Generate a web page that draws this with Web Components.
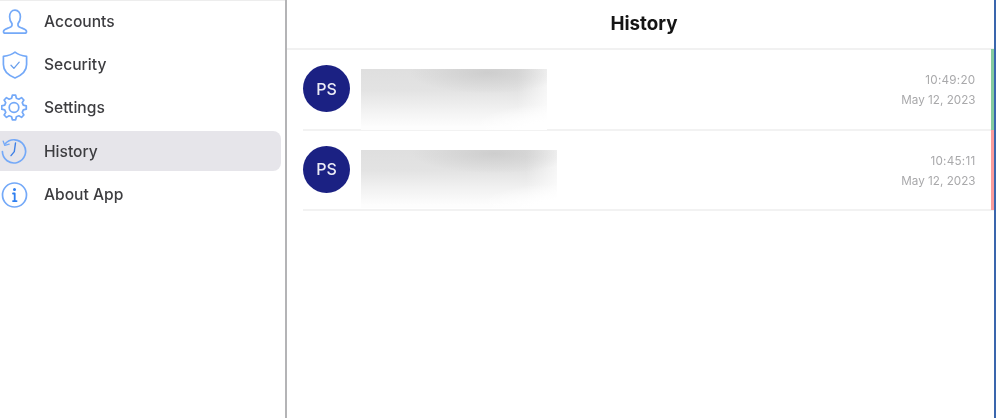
<!DOCTYPE html>
<html lang="en">
<head>
<meta charset="utf-8">
<title>History</title>
<style>
  html, body { margin: 0; height: 100%; background: #fff; overflow: hidden; }
</style>
</head>
<body>
<app-shell>
  <side-nav slot="nav">
    <nav-item label="Accounts" icon="accounts"></nav-item>
    <nav-item label="Security" icon="security"></nav-item>
    <nav-item label="Settings" icon="settings"></nav-item>
    <nav-item label="History" icon="history" selected></nav-item>
    <nav-item label="About App" icon="about"></nav-item>
  </side-nav>
  <history-panel slot="main" heading="History">
    <history-row initials="PS" time="10:49:20" date="May 12, 2023" status="ok" smudge="186" tall></history-row>
    <history-row initials="PS" time="10:45:11" date="May 12, 2023" status="fail" smudge="196"></history-row>
  </history-panel>
</app-shell>

<script>
function gearPath(cx, cy) {
  const teeth = 8, rOut = 12.4, rIn = 9.6;
  let d = "";
  for (let i = 0; i < teeth; i++) {
    const a = (i / teeth) * Math.PI * 2 - Math.PI / 2;
    const step = (Math.PI * 2) / teeth;
    const pts = [
      [rIn, a - step * 0.32],
      [rOut, a - step * 0.17],
      [rOut, a + step * 0.17],
      [rIn, a + step * 0.32],
    ];
    pts.forEach(([r, t], j) => {
      const x = (cx + r * Math.cos(t)).toFixed(2);
      const y = (cy + r * Math.sin(t)).toFixed(2);
      d += (i === 0 && j === 0 ? "M" : "L") + x + " " + y + " ";
    });
  }
  return d + "Z";
}

const ICONS = {
  accounts: `<path d="M14 2.200c-3.300 0-5.400 2.800-5.400 6.600 0 2.900 1 5.200 2.400 6.800v1.600c0 1.200-1 1.800-3.600 2.800-3 1.100-4.900 1.700-4.900 3.400 0 1.100.7 1.800 1.900 1.800h19.200c1.200 0 1.900-.7 1.900-1.800 0-1.700-1.900-2.300-4.900-3.400-2.600-1-3.600-1.600-3.600-2.800v-1.600c1.400-1.600 2.400-3.900 2.400-6.800 0-3.800-2.100-6.600-5.400-6.600z"/>`,
  security: `<path d="M14 1.200c3 2.400 7 3.700 11.600 4.200v8.200c0 5.800-4.400 10.600-11.600 13.400C6.800 24.200 2.400 19.400 2.400 13.600V5.400C7 4.900 11 3.600 14 1.200z"/><path d="M10 14.300l2.900 3.100 5.300-6.200" stroke="#6a9fec" stroke-width="1.300"/>`,
  settings: `<path stroke-linejoin="round" d="${gearPath(13, 13.5)}"/><circle cx="13" cy="13.500" r="4.800"/>`,
  history: `<path d="M4.200 6.800a11.600 11.600 0 1 1-2.800 7.700"/><path d="M2.200 4.200l1.600 4.200 4.400-1.200" stroke-width="1.300"/><path d="M14.500 6l-1.200 8.600-3.300 4" stroke="#3f80e6" stroke-width="1.400"/>`,
  about: `<circle cx="13.500" cy="14" r="12"/><circle cx="13.500" cy="8.600" r="1.500" fill="#2f7ff0" stroke="none"/><path d="M12 12.500h1.700v7.400M12 20.100h3.600" stroke="#2f7ff0" stroke-width="1.800"/>`,
};

const navItemTemplate = document.createElement("template");
navItemTemplate.innerHTML = `
  <style>
    :host { display: flex; align-items: center; height: 40px; border-radius: 0 8px 8px 0; padding-left: 1px; }
    :host([selected]) { background: #e6e5ea; }
    :host([selected]) span { margin-top: 0; }
    svg { width: 28px; height: 28px; flex: none; fill: none; stroke: #74a9f8; stroke-width: 1.700; stroke-linecap: round; stroke-linejoin: round; }
    span { margin-left: 15px; margin-top: -1px; font: 450 15.600px Inter, "Liberation Sans", sans-serif; color: #3d3d40; }
  </style>
  <svg viewBox="0 0 28 28"></svg><span></span>`;

class NavItem extends HTMLElement {
  constructor() {
    super();
    this.attachShadow({ mode: "open" });
    this.shadowRoot.appendChild(navItemTemplate.content.cloneNode(true));
  }
  connectedCallback() {
    this.shadowRoot.querySelector("span").textContent = this.getAttribute("label");
    this.shadowRoot.querySelector("svg").innerHTML = ICONS[this.getAttribute("icon")];
  }
}

class SideNav extends HTMLElement {
  constructor() {
    super();
    this.attachShadow({ mode: "open" });
    this.shadowRoot.innerHTML = `
      <style>
        :host { display: flex; flex-direction: column; gap: 3.330px; padding: 1px 4px 0 0; box-sizing: border-box; height: 100%; }
      </style>
      <slot></slot>`;
  }
}

class HistoryRow extends HTMLElement {
  constructor() {
    super();
    this.attachShadow({ mode: "open" });
  }
  connectedCallback() {
    const status = this.getAttribute("status");
    this.shadowRoot.innerHTML = `
      <style>
        :host { display: flex; height: 80.500px; box-sizing: border-box; border-bottom: 2px solid #f2f2f2; margin-left: 16px; }
        .avatar { width: 47px; height: 47px; margin: 15px 11px 0 0; flex: none; border-radius: 50%; background: #1b2183; color: #ececf6;
          display: flex; align-items: center; justify-content: center; font: 500 16px Inter, "Liberation Sans", sans-serif; }
        .smudge { flex: none; margin-top: 19px; position: relative; z-index: 1; }
        .fill { height: 100%;
          background:
            radial-gradient(ellipse 40% 42% at 100% 100%, #fff 30%, rgba(255,255,255,0)),
            radial-gradient(ellipse 42% 34% at 68% 6%, rgba(196,196,196,.65), rgba(196,196,196,0)),
            linear-gradient(to right, rgba(255,255,255,0) 84%, rgba(255,255,255,.7) 100%),
            linear-gradient(to bottom, #dfdfdf 0%, #e3e3e3 35%, #f2f2f2 68%, #fdfdfd 95%); }
        .when { margin-left: auto; padding: 20px 15px 0 0; text-align: right; font: 400 11.700px Inter, "Liberation Sans", sans-serif; color: #a9a9ab; line-height: 20px; }
        .t { letter-spacing: .25px; }
        .bar { width: 3.500px; flex: none; margin: -1px 0 -1px; background: ${status === "ok" ? "#85cb9f" : "#fb9c9c"}; }
      </style>
      <div class="avatar"></div>
      <div class="smudge" style="width:${this.getAttribute("smudge")}px;height:${this.hasAttribute("tall") ? 61 : 58}px"><div class="fill"></div></div>
      <div class="when"><div class="t"></div><div class="d"></div></div>
      <div class="bar"></div>`;
    this.shadowRoot.querySelector(".avatar").textContent = this.getAttribute("initials");
    this.shadowRoot.querySelector(".t").textContent = this.getAttribute("time");
    this.shadowRoot.querySelector(".d").textContent = this.getAttribute("date");
  }
}

class HistoryPanel extends HTMLElement {
  constructor() {
    super();
    this.attachShadow({ mode: "open" });
    this.shadowRoot.innerHTML = `
      <style>
        :host { display: block; height: 100%; }
        header { height: 50px; box-sizing: border-box; border-bottom: 2px solid #f1f1f1; padding: 0 0 2px 7px; display: flex; align-items: center; justify-content: center;
          font: 700 18.800px Inter, "Liberation Sans", sans-serif; color: #151515; }
      </style>
      <header></header>
      <slot></slot>`;
  }
  connectedCallback() {
    this.shadowRoot.querySelector("header").textContent = this.getAttribute("heading");
  }
}

class AppShell extends HTMLElement {
  constructor() {
    super();
    this.attachShadow({ mode: "open" });
    this.shadowRoot.innerHTML = `
      <style>
        :host { display: block; width: 998px; height: 418px; overflow: hidden; background: #fff; }
        .frame { display: grid; grid-template-columns: 285px 709px; height: 100%; filter: blur(.45px); width: 996px; box-sizing: border-box; border-right: 2px solid #3a66ad; }
        .left { border-top: 1.500px solid #ededed; box-sizing: border-box; margin-top: -0.500px; }
        .right { border-left: 2.500px solid #b4b4b6; box-sizing: border-box; }
      </style>
      <div class="frame">
        <div class="left"><slot name="nav"></slot></div>
        <div class="right"><slot name="main"></slot></div>
      </div>`;
  }
}

customElements.define("nav-item", NavItem);
customElements.define("side-nav", SideNav);
customElements.define("history-row", HistoryRow);
customElements.define("history-panel", HistoryPanel);
customElements.define("app-shell", AppShell);
</script>
</body>
</html>
